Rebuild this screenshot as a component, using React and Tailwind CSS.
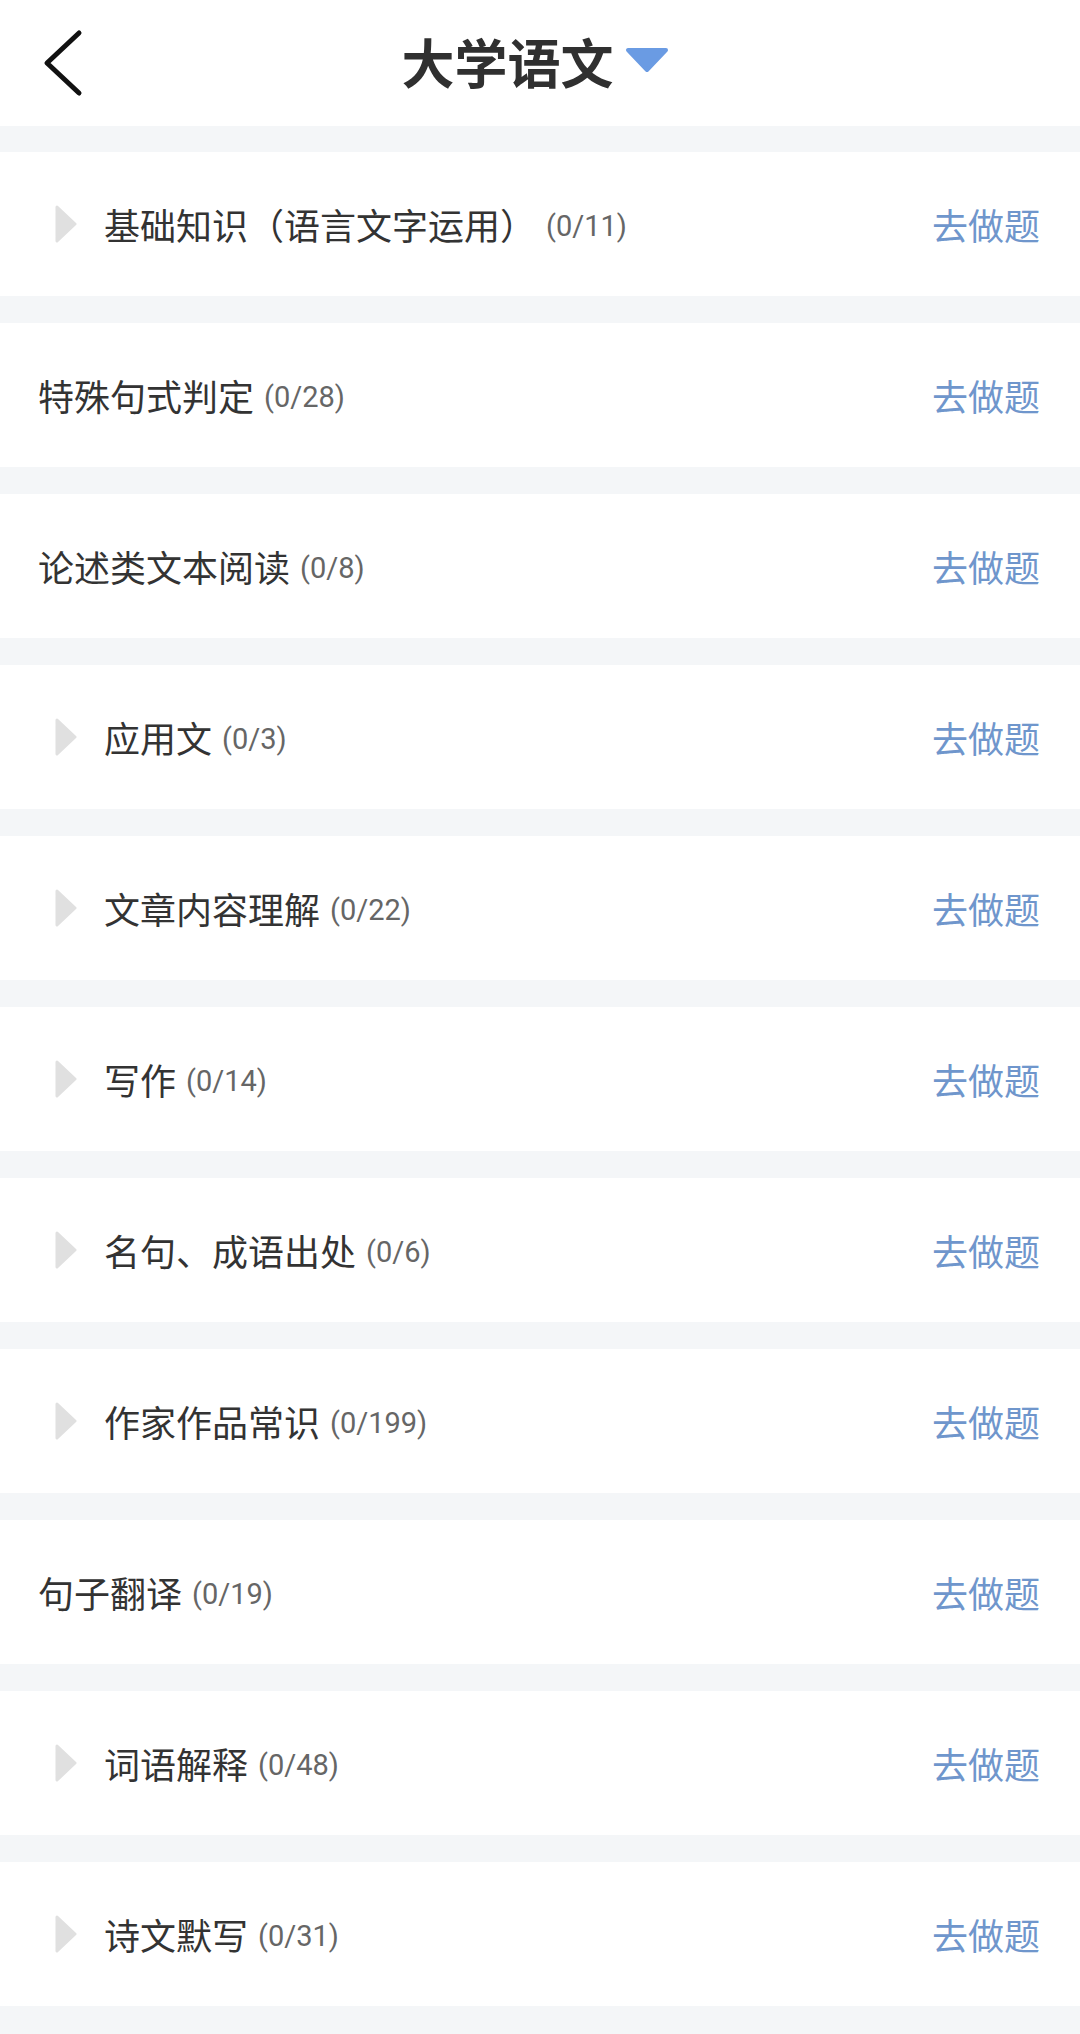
// App.jsx
const ITEMS = [
  { name: "基础知识（语言文字运用）", count: "(0/11)", arrow: true },
  { name: "特殊句式判定", count: "(0/28)", arrow: false },
  { name: "论述类文本阅读", count: "(0/8)", arrow: false },
  { name: "应用文", count: "(0/3)", arrow: true },
  { name: "文章内容理解", count: "(0/22)", arrow: true },
  { name: "写作", count: "(0/14)", arrow: true },
  { name: "名句、成语出处", count: "(0/6)", arrow: true },
  { name: "作家作品常识", count: "(0/199)", arrow: true },
  { name: "句子翻译", count: "(0/19)", arrow: false },
  { name: "词语解释", count: "(0/48)", arrow: true },
  { name: "诗文默写", count: "(0/31)", arrow: true },
];

const CJK = {
  fontFamily: '"Noto Sans CJK SC", "Noto Sans", sans-serif',
};

export default function App() {
  return (
    <div className="min-h-screen bg-[#f4f6f8]" style={CJK}>
      {/* header */}
      <div className="h-[126px] bg-white flex items-center">
        <div className="w-[120px] pl-[43px] flex items-center">
          <svg width="42" height="68" viewBox="0 0 42 68">
            <path
              d="M36 4 L4 34 L36 64"
              fill="none"
              stroke="#111"
              strokeWidth="5"
              strokeLinecap="round"
              strokeLinejoin="round"
            />
          </svg>
        </div>
        <div className="flex-1 flex items-center justify-center">
          <span className="text-[53px] font-bold text-[#303030] leading-none -mt-[4px]">
            大学语文
          </span>
          <svg width="44" height="26" viewBox="0 0 44 26" className="ml-[11px] -mt-[6px]">
            <path
              d="M3 3 L41 3 L22 23 Z"
              fill="#6a9be3"
              stroke="#6a9be3"
              strokeWidth="4"
              strokeLinejoin="round"
            />
          </svg>
        </div>
        <div className="w-[130px]" />
      </div>

      {/* list */}
      <div className="pt-[26px] pb-[28px] flex flex-col gap-[27px]">
        {ITEMS.map((item) => (
          <Row key={item.name} {...item} />
        ))}
      </div>
    </div>
  );
}

function Row({ name, count, arrow }) {
  return (
    <div
      className={
        "h-[144px] bg-white flex items-center pr-[40px] " +
        (arrow ? "pl-[55px]" : "pl-[38px]")
      }
    >
      {arrow && (
        <svg width="22" height="40" viewBox="0 0 22 40" className="mr-[27px] shrink-0">
          <path
            d="M2 3 L20 20 L2 37 Z"
            fill="#e0e0e0"
            stroke="#e0e0e0"
            strokeWidth="3"
            strokeLinejoin="round"
          />
        </svg>
      )}
      <div className="flex-1 flex items-center">
        <span className="text-[36px] text-[#333333] leading-none">{name}</span>
        <span
          className="ml-[10px] mt-[5px] text-[29px] text-[#666666] leading-none"
          style={{ fontFamily: 'Roboto, "Noto Sans", sans-serif' }}
        >
          {count}
        </span>
      </div>
      <span className="text-[36px] text-[#6f96cc] leading-none">去做题</span>
    </div>
  );
}
